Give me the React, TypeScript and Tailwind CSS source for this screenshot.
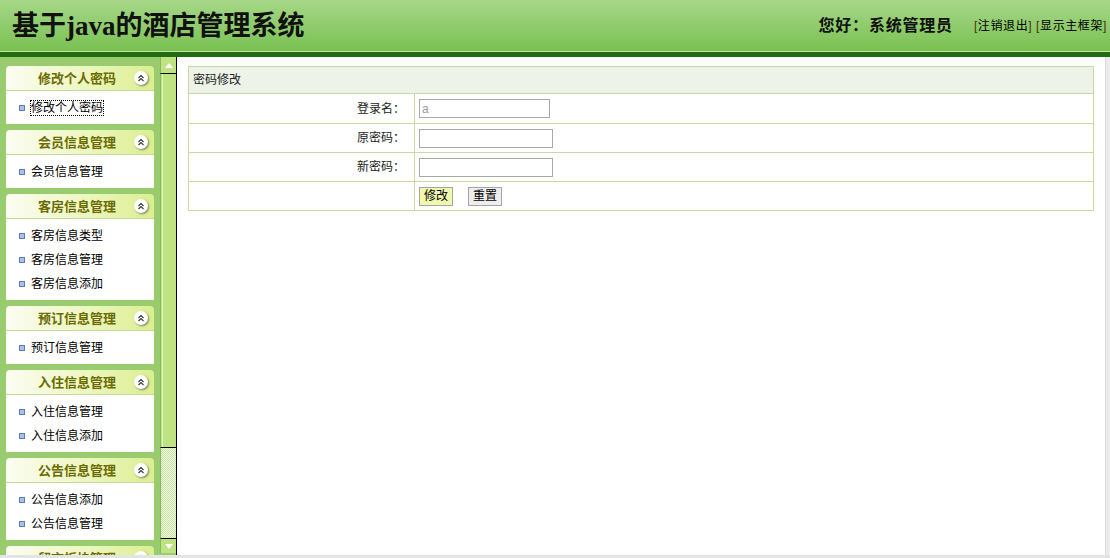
import React from 'react';

const menus = [
  { title: '修改个人密码', items: ['修改个人密码'] },
  { title: '会员信息管理', items: ['会员信息管理'] },
  { title: '客房信息管理', items: ['客房信息类型', '客房信息管理', '客房信息添加'] },
  { title: '预订信息管理', items: ['预订信息管理'] },
  { title: '入住信息管理', items: ['入住信息管理', '入住信息添加'] },
  { title: '公告信息管理', items: ['公告信息添加', '公告信息管理'] },
  { title: '留言板块管理', items: ['留言板块管理'] },
];

function CollapseIcon() {
  return (
    <span className="w-[14px] h-[14px] rounded-full bg-white shadow-[1px_1px_2px_rgba(0,0,0,0.45)] flex items-center justify-center mr-[6px]">
      <svg width="8" height="8" viewBox="0 0 8 8">
        <path d="M1.5 4 L4 1.5 L6.5 4 M1.5 7 L4 4.5 L6.5 7" fill="none" stroke="#333" strokeWidth="1.1" />
      </svg>
    </span>
  );
}

function MenuPanel({ title, items, first }: { title: string; items: string[]; first?: boolean }) {
  return (
    <div className="w-[148px] shrink-0">
      <div className="h-[25px] rounded-t-[4px] bg-linear-to-r from-[#fbfdf2] via-[#eef7c4] to-[#dcee90] border-b border-[#c6d89e] flex items-center">
        <span className="flex-1 text-center pl-[14px] text-[13px] font-bold text-[#6b6b00] leading-none">{title}</span>
        <CollapseIcon />
      </div>
      <div className="bg-white pt-[5px] pb-[4px] pl-[13px]">
        {items.map((it, i) => (
          <div key={it + i} className="h-[24px] flex items-center gap-[6px]">
            <span className="w-[6px] h-[6px] bg-[#a9c2ea] border border-[#5d7cb2]" />
            <span
              className={
                first && i === 0
                  ? 'text-[12px] text-black leading-[14px] outline-1 outline-dotted outline-black'
                  : 'text-[12px] text-black leading-[14px]'
              }
            >
              {it}
            </span>
          </div>
        ))}
      </div>
    </div>
  );
}

function ScrollStrip() {
  return (
    <div className="w-[17px] h-full flex flex-col bg-[#99cc6f] border-r border-black">
      <div className="h-[16px] border-l border-[#86bb5c] bg-[#bfe383] flex items-center justify-center">
        <svg width="8" height="5" viewBox="0 0 8 5">
          <path d="M0 5 L4 0 L8 5 Z" fill="#ffffff" />
        </svg>
      </div>
      <div className="h-[375px] border-y border-black border-l border-l-[#86bb5c] bg-[#bfe383] flex">
        <div className="w-[1px] ml-[1px] bg-[#e2f4c4]" />
      </div>
      <div className="flex-1 border-l border-[#86bb5c] bg-[repeating-conic-gradient(#c3e59b_0%_25%,#f3faea_0%_50%)] bg-size-[2px_2px]" />
      <div className="h-[15px] border-t border-black border-l border-l-[#86bb5c] bg-[#bfe383] flex items-center justify-center">
        <svg width="8" height="5" viewBox="0 0 8 5">
          <path d="M0 0 L4 5 L8 0 Z" fill="#ffffff" />
        </svg>
      </div>
      <div className="h-[2px]" />
    </div>
  );
}

export default function App() {
  return (
    <div className="w-[1110px] h-[558px] flex flex-col overflow-hidden bg-white font-['Liberation_Sans','Noto_Sans_CJK_SC',sans-serif]">
      <header className="h-[51px] shrink-0 bg-linear-to-b from-[#a6d788] to-[#79c151] flex items-center justify-between pl-[12px] pr-[3px]">
        <h1 className="text-[27px] font-bold text-[#111] font-['Liberation_Serif','Noto_Sans_CJK_SC',serif] leading-none pt-[2px]">
          基于java的酒店管理系统
        </h1>
        <div className="flex items-center">
          <span className="text-[16px] font-bold text-[#111] tracking-[0.8px]">您好：系统管理员</span>
          <span className="ml-[21px] text-[12px] text-black tracking-[0.6px]">
            <span className="text-[#4a3200]">[</span>注销退出<span className="text-[#4a3200]">]</span>{' '}
            <span className="text-[#4a3200]">[</span>显示主框架<span className="text-[#4a3200]">]</span>
          </span>
        </div>
      </header>
      <div className="h-[1px] shrink-0 bg-[#c4e4a4]" />
      <div className="h-[5px] shrink-0 bg-[#246a12]" />

      <div className="flex-1 flex min-h-0">
        <aside className="w-[160px] h-full bg-[#99cc6f] pt-[9px] pl-[6px] flex flex-col gap-[6px] overflow-hidden">
          {menus.map((m, i) => (
            <MenuPanel key={m.title} title={m.title} items={m.items} first={i === 0} />
          ))}
        </aside>
        <ScrollStrip />
        <main className="flex-1 h-full bg-white pt-[9px] pl-[11px] pr-[11px]">
          <table className="w-full border-collapse text-[12px] text-[#222]">
            <tbody>
              <tr className="h-[27px] bg-[#edf3e8]">
                <td colSpan={2} className="border border-[#c9d9a2] pl-[4px] text-left">
                  密码修改
                </td>
              </tr>
              <tr className="h-[30px]">
                <td className="w-[226px] border border-[#c9d9a2] text-right pr-[9px]">登录名：</td>
                <td className="border border-[#c9d9a2] pl-[4px]">
                  <input
                    readOnly
                    value="a"
                    className="w-[131px] h-[19px] border border-[#a9a9a9] px-[2px] text-[12px] text-[#999] align-middle outline-none"
                  />
                </td>
              </tr>
              <tr className="h-[29px]">
                <td className="border border-[#c9d9a2] text-right pr-[9px]">原密码：</td>
                <td className="border border-[#c9d9a2] pl-[4px]">
                  <input type="password" className="w-[134px] h-[19px] border border-[#a9a9a9] align-middle outline-none" />
                </td>
              </tr>
              <tr className="h-[29px]">
                <td className="border border-[#c9d9a2] text-right pr-[9px]">新密码：</td>
                <td className="border border-[#c9d9a2] pl-[4px]">
                  <input type="password" className="w-[134px] h-[19px] border border-[#a9a9a9] align-middle outline-none" />
                </td>
              </tr>
              <tr className="h-[29px]">
                <td className="border border-[#c9d9a2]" />
                <td className="border border-[#c9d9a2] pl-[4px]">
                  <div className="flex items-center gap-[15px]">
                    <button className="w-[34px] h-[19px] bg-[#f2f7ae] border border-[#a5a5a5] text-[12px] text-black leading-none">
                      修改
                    </button>
                    <button className="w-[34px] h-[19px] bg-[#ededed] border border-[#a5a5a5] text-[12px] text-black leading-none">
                      重置
                    </button>
                  </div>
                </td>
              </tr>
            </tbody>
          </table>
        </main>
        <div className="w-[5px] h-full bg-[#ebebeb] border-l border-[#dadada]" />
      </div>
      <div className="h-[3px] shrink-0 bg-[#e4e4e4]" />
    </div>
  );
}
